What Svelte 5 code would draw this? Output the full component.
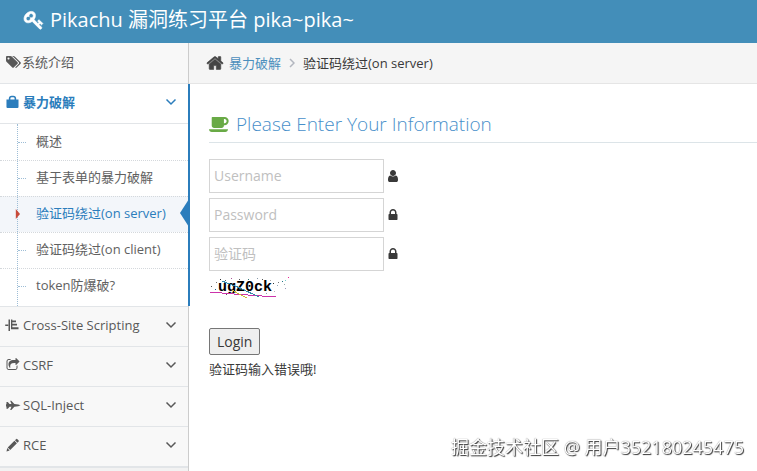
<script>
  const icons = {
    tags: "M448 448q0-53-37.500-90.500t-90.500-37.500-90.500 37.500-37.500 90.500 37.500 90.500 90.500 37.500 90.500-37.500 37.500-90.500zm1067 576q0 53-37 90l-491 492q-39 37-91 37-53 0-90-37l-715-716q-38-37-64.500-101t-26.500-117v-416q0-52 38-90t90-38h416q53 0 117 26.500t102 64.500l715 714q37 39 37 91zm384 0q0 53-37 90l-491 492q-39 37-91 37-36 0-59-14t-53-45l470-470q37-37 37-90 0-52-37-91l-715-714q-38-38-102-64.500t-117-26.500h224q53 0 117 26.500t102 64.500l715 714q37 39 37 91z",
    bag: "M60 560h300v-110q0-370 370-370h200q370 0 370 370v110h300v960q0 144-128 144h-1284q-128 0-128-144v-960zm500 0h540v-100q0-180-180-180h-180q-180 0-180 180z",
    tree: "M-100 820h380v190h-380zM320 180h190v1480h-190zM640 180h170v140h470v210h-470v220h600v210h-600v230h790v250h-960v-1260z",
    share: "M1472 989v259q0 119-84.500 203.500t-203.500 84.500h-832q-119 0-203.500-84.500t-84.500-203.500v-832q0-119 84.500-203.500t203.500-84.500h255q13 0 22.500 9.500t9.500 22.500q0 27-26 32-77 26-133 60-10 4-16 4h-112q-66 0-113 47t-47 113v832q0 66 47 113t113 47h832q66 0 113-47t47-113v-214q0-19 18-29 28-13 54-37 16-16 35-8 21 9 21 29zm237-496l-384 384q-18 19-45 19-12 0-25-5-39-17-39-59v-192h-160q-323 0-438 131-119 137-74 473 3 23-20 34-8 2-12 2-16 0-26-13-10-14-21-31t-39.500-68.500-49.500-99.500-38.500-114-17.500-122q0-49 3.500-91t14-90 28-88 47-81.500 68.500-74 94.500-61.500 124.500-48.500 159.500-30.500 196.500-11h160v-192q0-42 39-59 13-5 25-5 26 0 45 19l384 384q19 19 19 45t-19 45z",
    jet: "M60 500h170l220 260h250l-170-420h150l390 430 500 60 290 110-290 110-500 60-390 430h-150l170-420h-250l-220 260h-170v-290h-60v-300h60z",
    pencil: "M60 1730l100-450 310 310zm160-520l860-860 320 320-860 860zm930-930l130-130q90-90 180 0l140 140q90 90 0 180l-130 130z",
    home: "M1472 992v480q0 26-19 45t-45 19h-384v-384h-256v384h-384q-26 0-45-19t-19-45v-480q0-1 .500-3t.500-3l575-474 575 474q1 2 1 6zm223-69l-62 74q-8 9-21 11h-3q-13 0-21-7l-692-577-692 577q-12 8-24 7-13-2-21-11l-62-74q-8-10-7-23.500t11-21.500l719-599q32-26 76-26t76 26l244 204v-195q0-14 9-23t23-9h192q14 0 23 9t9 23v408l219 182q10 8 11 21.500t-7 23.500z",
    key: "M832 512q0-80-56-136t-136-56-136 56-56 136q0 42 19 83-41-19-83-19-80 0-136 56t-56 136 56 136 136 56 136-56 56-136q0-42-19-83 41 19 83 19 80 0 136-56t56-136zm851 704q0 17-49 66t-66 49q-9 0-28.500-16t-36.500-33-38.500-40-24.500-26l-96 96 220 220q28 28 28 68 0 42-39 81t-81 39q-40 0-68-28l-671-671q-176 131-365 131-163 0-265.500-102.500t-102.500-265.500q0-160 95-313t248-248 313-95q163 0 265.500 102.500t102.500 265.500q0 189-131 365l355 355 96-96q-3-3-26-24.500t-40-38.500-33-36.500-16-28.500q0-17 49-66t66-49q13 0 23 10 6 6 46 44.500t82 79.500 86.500 86 73 78 28.500 41z",
    coffee: "M1664 576q0-80-56-136t-136-56h-64v384h64q80 0 136-56t56-136zm-1664 768h1792q0 106-75 181t-181 75h-1280q-106 0-181-75t-75-181zm1856-768q0 159-112.500 271.500t-271.500 112.500h-64v32q0 92-66 158t-158 66h-704q-92 0-158-66t-66-158v-736q0-26 19-45t45-19h1152q159 0 271.500 112.500t112.500 271.500z",
    user: "M1536 1399q0 109-62.500 187t-150.500 78h-854q-88 0-150.500-78t-62.500-187q0-85 8.500-160.500t31.500-152 58.500-131 94-89 134.500-34.500q131 128 313 128t313-128q76 0 134.500 34.500t94 89 58.500 131 31.500 152 8.500 160.500zm-256-887q0 159-112.500 271.500t-271.500 112.500-271.500-112.500-112.500-271.500 112.500-271.500 271.500-112.500 271.500 112.500 112.500 271.500z",
    lock: "M640 768h512v-192q0-106-75-181t-181-75-181 75-75 181v192zm832 96v576q0 40-28 68t-68 28h-960q-40 0-68-28t-28-68v-576q0-40 28-68t68-28h32v-192q0-184 132-316t316-132 316 132 132 316v192h32q40 0 68 28t28 68z",
  };

  const menu = [
    { label: "系统介绍", icon: "tags" },
    {
      label: "暴力破解",
      icon: "bag",
      open: true,
      children: [
        "概述",
        "基于表单的暴力破解",
        "验证码绕过(on server)",
        "验证码绕过(on client)",
        "token防爆破?",
      ],
    },
    { label: "Cross-Site Scripting", icon: "tree" },
    { label: "CSRF", icon: "share" },
    { label: "SQL-Inject", icon: "jet" },
    { label: "RCE", icon: "pencil" },
  ];

  const current = "验证码绕过(on server)";

  const fields = [
    { name: "username", label: "Username", type: "text", icon: "user" },
    { name: "password", label: "Password", type: "password", icon: "lock" },
    { name: "vcode", label: "验证码", type: "text", icon: "lock" },
  ];

  // noise dots of the captcha: x, y, colour
  const dots = [
    [2, 10, "#555"], [6, 13, "#268"], [7, 6, "#777"], [11, 3, "#333"],
    [16, 4, "#467"], [22, 2, "#a59"], [30, 3, "#555"], [39, 3, "#377"],
    [48, 2, "#89a"], [53, 3, "#555"], [61, 4, "#aaa"], [64, 7, "#333"],
    [68, 9, "#9ab"], [69, 6, "#777"], [73, 5, "#278"], [76, 4, "#7cc"],
    [76, 12, "#99b"], [79, 1, "#e29"], [75, 8, "#9aa"], [65, 15, "#bbb"],
    [10, 16, "#789"], [17, 18, "#555"], [57, 17, "#99a"], [43, 19, "#777"],
  ];
</script>

{#snippet icon(name)}
  <svg class="icon {name}" viewBox="0 0 1792 1792" aria-hidden="true">
    <path d={icons[name]} fill-rule={name === "bag" ? "evenodd" : "nonzero"} />
  </svg>
{/snippet}

<header class="navbar">
  <a class="brand" href="#home">
    {@render icon("key")}
    <span>Pikachu 漏洞练习平台 pika~pika~</span>
  </a>
</header>

<div class="main-container">
  <nav class="sidebar">
    <ul class="nav-list">
      {#each menu as item}
        <li class="nav-item" class:open={item.open}>
          <a class="nav-link" class:flush={item.icon === "tags"} href="#menu">
            {@render icon(item.icon)}
            <span class="menu-text">{item.label}</span>
            {#if item.icon !== "tags"}
              <svg class="arrow" viewBox="0 0 12 8" aria-hidden="true">
                <path d="M1.500 1.500 6 6l4.500-4.500" />
              </svg>
            {/if}
          </a>
          {#if item.children}
            <ul class="submenu">
              {#each item.children as child}
                <li class:active={child === current}>
                  <a href="#page">{child}</a>
                </li>
              {/each}
            </ul>
          {/if}
        </li>
      {/each}
      <li class="nav-item"></li>
    </ul>
  </nav>

  <main class="main-content">
    <div class="breadcrumbs">
      {@render icon("home")}
      <a href="#burteforce">暴力破解</a>
      <svg class="divider" viewBox="0 0 6 10" aria-hidden="true">
        <path d="M1 1l4 4-4 4" />
      </svg>
      <span>{current}</span>
    </div>

    <div class="page-content">
      <h4 class="header">
        {@render icon("coffee")}
        Please Enter Your Information
      </h4>

      <form on:submit|preventDefault>
        {#each fields as field}
          <label class="field">
            <input
              type={field.type}
              name={field.name}
              placeholder={field.label}
              aria-label={field.label}
            />
            {@render icon(field.icon)}
          </label>
        {/each}

        <svg class="captcha" viewBox="0 0 82 24">
          <text x="9" y="15">ugZ0ck</text>
          {#each dots as [x, y, color]}
            <rect {x} {y} width="1" height="1" fill={color} />
          {/each}
          <path d="M1 16l24 2 42 3" stroke="#c3a" />
          <path d="M13 5l18 7 19 9" stroke="#38a" />
          <path d="M23 14l7 4 8 4" stroke="#cb3" />
        </svg>

        <button type="submit">Login</button>
      </form>
      <p class="message">验证码输入错误哦!</p>
    </div>
  </main>
</div>

<div class="watermark">掘金技术社区 @ 用户352180245475</div>

<style>
  :global(body) {
    background: #fff;
    color: #393939;
    font-family: "Open Sans", "Noto Sans CJK SC", sans-serif;
    font-size: 13px;
    line-height: 20px;
    overflow: hidden;
  }

  :global(#app) {
    display: flex;
    flex-direction: column;
    min-height: 100vh;
  }

  * {
    box-sizing: border-box;
  }

  a {
    text-decoration: none;
  }

  ul {
    list-style: none;
    margin: 0;
    padding: 0;
  }

  .icon {
    width: 14px;
    height: 14px;
    flex: none;
    fill: currentColor;
    overflow: visible;
  }

  .navbar {
    background: #438eb9;
    padding: 0 24px;
    height: 43px;
  }

  .brand {
    display: flex;
    align-items: center;
    gap: 6px;
    height: 40px;
    color: #fff;
    font-size: 20px;
    white-space: nowrap;
  }

  .icon.key {
    width: 20px;
    height: 20px;
    stroke: currentColor;
    stroke-width: 60;
  }

  .main-container {
    display: flex;
    flex: 1;
  }

  .sidebar {
    width: 189px;
    flex: none;
    background: #f2f2f2;
    border-right: 1px solid #ccc;
  }

  .nav-item {
    position: relative;
    border-bottom: 1px solid #e2e5e8;
  }

  .nav-item.open::after {
    content: "";
    position: absolute;
    top: 0;
    bottom: 0;
    right: -2px;
    width: 2px;
    background: #2b7dbc;
  }

  .nav-link {
    display: flex;
    align-items: center;
    gap: 3px;
    height: 39px;
    padding: 0 11px 3px 6px;
    background: #f8f8f8;
    color: #585858;
    white-space: nowrap;
  }

  .nav-item:first-child .nav-link {
    height: 40px;
  }

  .flush {
    gap: 2px;
  }

  .open .nav-link {
    background: #fff;
    color: #2b7dbc;
    font-weight: 700;
  }

  .arrow {
    width: 12px;
    height: 8px;
    margin-left: auto;
    fill: none;
    stroke: currentColor;
    stroke-width: 1.5;
  }

  .submenu {
    position: relative;
    padding-bottom: 2px;
    background: #fff;
    border-top: 1px solid #e2e5e8;
  }

  /* vertical dotted tree line */
  .submenu::before {
    content: "";
    position: absolute;
    z-index: 1;
    top: 0;
    bottom: 0;
    left: 17px;
    border-left: 1px dotted #9dbdd6;
  }

  .submenu li {
    position: relative;
    height: 36px;
    border-top: 1px dotted #d4d8dc;
  }

  .submenu li:first-child {
    border-top-color: transparent;
  }

  .submenu li::before {
    content: "";
    position: absolute;
    top: 17px;
    left: 18px;
    width: 8px;
    border-top: 1px dotted #9dbdd6;
  }

  .submenu a {
    display: block;
    padding: 6px 0 9px 36px;
    color: #616161;
    white-space: nowrap;
  }

  .submenu .active {
    background: #f3f6fa;
  }

  .submenu .active a {
    color: #2b7dbc;
  }

  .submenu .active::before {
    z-index: 2;
    top: 12px;
    left: 14px;
    width: 6px;
    height: 10px;
    border: 0;
    background: #c84a39;
    clip-path: polygon(30% 0, 100% 50%, 30% 100%);
  }

  .submenu .active::after {
    content: "";
    position: absolute;
    top: 2px;
    right: -1px;
    width: 9px;
    height: 28px;
    background: #2b7dbc;
    clip-path: polygon(100% 0, 0 50%, 100% 100%);
  }

  .main-content {
    flex: 1;
    min-width: 0;
  }

  .breadcrumbs {
    display: flex;
    align-items: center;
    height: 41px;
    padding-left: 17px;
    background: #f5f5f5;
    border-bottom: 1px solid #e5e5e5;
    white-space: nowrap;
  }

  .breadcrumbs a {
    margin-left: 5px;
    color: #4c8fbd;
  }

  .icon.home {
    width: 18px;
    height: 18px;
    color: #444;
    stroke: currentColor;
    stroke-width: 60;
  }

  .divider {
    width: 6px;
    height: 10px;
    margin: 0 8px;
    fill: none;
    stroke: #b2b6bf;
    stroke-width: 1.5;
  }

  .page-content {
    padding: 24px 0 0 20px;
  }

  .header {
    display: flex;
    align-items: center;
    gap: 8px;
    height: 35px;
    margin: 0 0 16px;
    padding-bottom: 2px;
    border-bottom: 1px solid #dce4e8;
    color: #478fca;
    font-size: 19px;
    font-weight: 300;
    white-space: nowrap;
  }

  .icon.coffee {
    width: 19px;
    height: 19px;
    color: #69aa46;
  }

  .field {
    display: flex;
    align-items: center;
    gap: 2px;
    margin-bottom: 5px;
  }

  input {
    width: 175px;
    height: 34px;
    padding: 4px 4px 6px;
    border: 1px solid #d5d5d5;
    border-radius: 0;
    background: #fff;
    color: #858585;
    font: inherit;
    font-size: 14px;
  }

  input::placeholder {
    color: #c0c0c0;
    opacity: 1;
  }

  .captcha {
    display: block;
    width: 82px;
    height: 24px;
    margin-bottom: 28px;
    fill: none;
    shape-rendering: crispEdges;
  }

  .captcha text {
    fill: #000;
    font-family: "Liberation Mono", monospace;
    font-size: 15px;
    font-weight: 700;
  }

  button {
    display: block;
    height: 27px;
    padding: 0 7px;
    border: 1px solid #767676;
    border-radius: 2px;
    background: #efefef;
    color: #393939;
    font: inherit;
    font-size: 14px;
  }

  .message {
    margin: 4px 0 0;
  }

  .watermark {
    position: fixed;
    right: 13px;
    bottom: 11px;
    color: #fff;
    font-size: 18px;
    line-height: 26px;
    text-shadow: 1px 1px 1px #333, 0 0 1px #666;
    white-space: nowrap;
  }
</style>
